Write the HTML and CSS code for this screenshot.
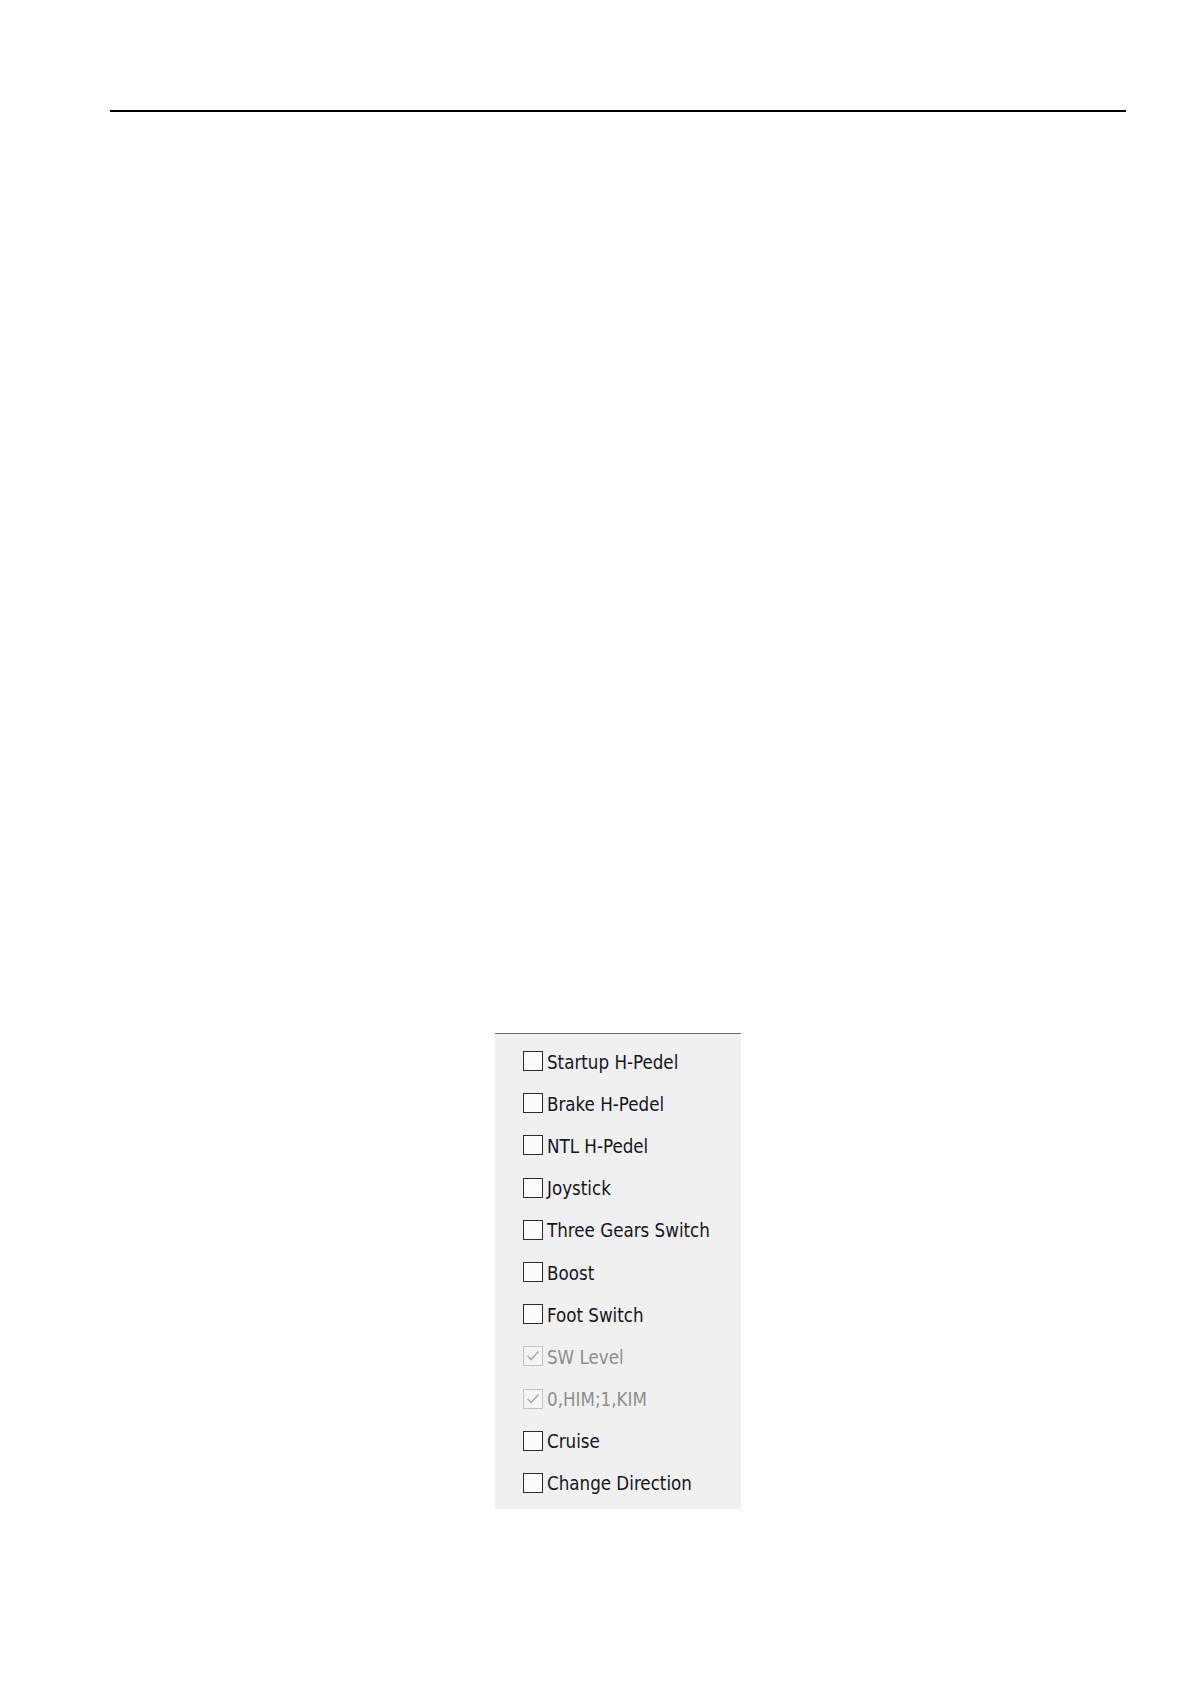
FILE: index.html
```html
<!DOCTYPE html>
<html>
<head>
<meta charset="utf-8">
<link rel="stylesheet" href="styles.css">
</head>
<body>
<div class="rule"></div>
<div class="panel">
  <div class="row"><span class="box"></span><span class="label">Startup H-Pedel</span></div>
  <div class="row"><span class="box"></span><span class="label">Brake H-Pedel</span></div>
  <div class="row"><span class="box"></span><span class="label">NTL H-Pedel</span></div>
  <div class="row"><span class="box"></span><span class="label">Joystick</span></div>
  <div class="row"><span class="box"></span><span class="label">Three Gears Switch</span></div>
  <div class="row"><span class="box"></span><span class="label">Boost</span></div>
  <div class="row"><span class="box"></span><span class="label">Foot Switch</span></div>
  <div class="row disabled"><span class="box"><svg viewBox="0 0 20 20" width="18" height="18"><polyline points="4,10 8,14 16,5" fill="none" stroke="#a9a9a9" stroke-width="1.6"/></svg></span><span class="label">SW Level</span></div>
  <div class="row disabled"><span class="box"><svg viewBox="0 0 20 20" width="18" height="18"><polyline points="4,10 8,14 16,5" fill="none" stroke="#a9a9a9" stroke-width="1.6"/></svg></span><span class="label">0,HIM;1,KIM</span></div>
  <div class="row"><span class="box"></span><span class="label">Cruise</span></div>
  <div class="row"><span class="box"></span><span class="label">Change Direction</span></div>
</div>
</body>
</html>
```
FILE: styles.css
```css
html, body {
  margin: 0;
  padding: 0;
  background: #ffffff;
}
body {
  width: 1191px;
  height: 1684px;
  font-family: "DejaVu Sans Condensed", "Liberation Sans", sans-serif;
}
.rule {
  margin: 110px 0 0 110px;
  width: 1016px;
  height: 2px;
  background: #000;
}
.panel {
  margin: 921px 0 0 495px;
  width: 246px;
  box-sizing: border-box;
  background: #f0f0f0;
  border-top: 1px solid #6e6e6e;
  padding: 6px 0 5px 28px;
}
.row {
  height: 42.2px;
  display: flex;
  align-items: center;
  gap: 4px;
}
.box {
  width: 20px;
  height: 20px;
  box-sizing: border-box;
  border: 1.6px solid #2e2e2e;
  background: #fcfcfc;
  display: flex;
  align-items: center;
  justify-content: center;
}
.label {
  font-size: 18.6px;
  color: #16161f;
  white-space: nowrap;
  padding-top: 2px;
}
.disabled .box {
  border-color: #c4c4c4;
  background: #f4f4f4;
}
.disabled .label {
  color: #8e8e8e;
}
```
